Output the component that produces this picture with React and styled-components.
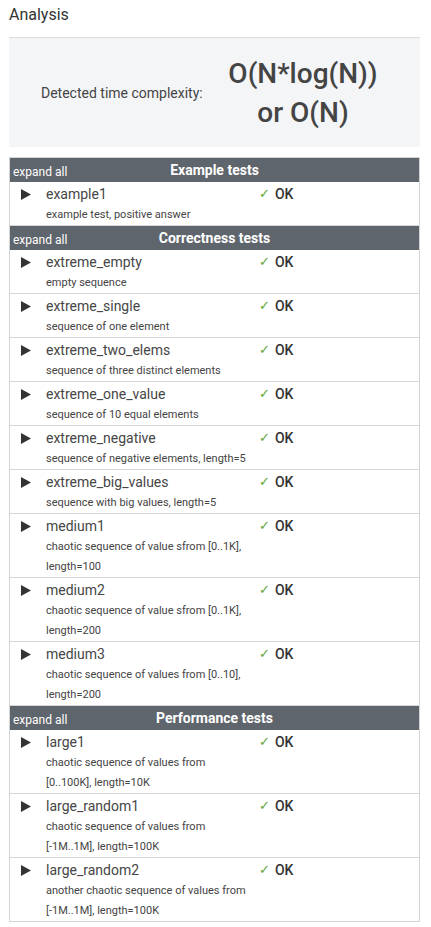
import React from "react";
import styled, { createGlobalStyle } from "styled-components";

const Global = createGlobalStyle`
  html, body { margin: 0; padding: 0; background: #fff; }
  body { font-family: Roboto, "Liberation Sans", Arial, sans-serif; color: #444; }
`;

const Page = styled.div`
  width: 411px;
  padding: 5px 0 6px 9px;
`;

const Title = styled.h2`
  margin: 0 0 12px;
  font-size: 16px;
  line-height: 20px;
  font-weight: 400;
  color: #333;
`;

const ComplexityBox = styled.div`
  display: grid;
  grid-template-columns: 200px 1fr;
  align-items: center;
  height: 110px;
  box-sizing: border-box;
  border-top: 1px solid #dcdcdc;
  background: #f4f5f7;
  padding-right: 23px;
`;

const ComplexityLabel = styled.div`
  padding-left: 32px;
  font-size: 14px;
  color: #444;
  white-space: nowrap;
`;

const ComplexityValue = styled.div`
  text-align: center;
  font-size: 28px;
  line-height: 39px;
  font-weight: 500;
  color: #444;
`;

const Table = styled.div`
  margin-top: 10px;
  border: 1px solid #d4d4d4;
  box-sizing: border-box;
`;

const GroupHeader = styled.div`
  display: grid;
  grid-template-columns: 1fr auto 1fr;
  height: 24px;
  background: #5f656c;
  color: #fff;
`;

const ExpandAll = styled.span`
  font-size: 12px;
  line-height: 24px;
  padding: 2px 0 0 3px;
`;

const GroupTitle = styled.span`
  font-size: 14px;
  line-height: 24px;
  font-weight: 700;
`;

const Row = styled.div`
  display: grid;
  grid-template-columns: 36px 213px 1fr;
  padding-top: 1px;
  border-bottom: ${(p) => (p.$last ? "none" : "1px solid #d6d6d6")};
`;

const Toggle = styled.div`
  grid-column: 1;
  grid-row: 1;
  display: flex;
  align-items: center;
  padding-left: 11px;
  height: 22px;
`;

const TestName = styled.div`
  grid-column: 2;
  grid-row: 1;
  font-size: 14px;
  line-height: 22px;
  color: #464646;
`;

const Status = styled.div`
  grid-column: 3;
  grid-row: 1;
  font-size: 14px;
  line-height: 22px;
  font-weight: 500;
  color: #333;
  display: flex;
  gap: 5px;
  align-items: center;
`;

const Check = styled.span`
  color: #5ea336;
  font-family: "DejaVu Sans", sans-serif;
  font-size: 13px;
  font-weight: 400;
`;

const Desc = styled.div`
  grid-column: 2;
  grid-row: 2;
  width: 204px;
  font-size: 11px;
  line-height: 20px;
  color: #444;
`;

const Triangle = () => (
  <svg width="10" height="11" viewBox="0 0 10 11">
    <polygon points="0,0 10,5.5 0,11" fill="#333" />
  </svg>
);

const groups = [
  {
    title: "Example tests",
    tests: [["example1", "example test, positive answer"]],
  },
  {
    title: "Correctness tests",
    tests: [
      ["extreme_empty", "empty sequence"],
      ["extreme_single", "sequence of one element"],
      ["extreme_two_elems", "sequence of three distinct elements"],
      ["extreme_one_value", "sequence of 10 equal elements"],
      ["extreme_negative", "sequence of negative elements, length=5"],
      ["extreme_big_values", "sequence with big values, length=5"],
      ["medium1", "chaotic sequence of value sfrom [0..1K], length=100"],
      ["medium2", "chaotic sequence of value sfrom [0..1K], length=200"],
      ["medium3", "chaotic sequence of values from [0..10], length=200"],
    ],
  },
  {
    title: "Performance tests",
    tests: [
      ["large1", "chaotic sequence of values from [0..100K], length=10K"],
      ["large_random1", "chaotic sequence of values from [-1M..1M], length=100K"],
      ["large_random2", "another chaotic sequence of values from [-1M..1M], length=100K"],
    ],
  },
];

export default function App() {
  return (
    <>
      <Global />
      <Page>
        <Title>Analysis</Title>
        <ComplexityBox>
          <ComplexityLabel>Detected time complexity:</ComplexityLabel>
          <ComplexityValue>
            O(N*log(N))
            <br />
            or O(N)
          </ComplexityValue>
        </ComplexityBox>
        <Table>
          {groups.map((g, gi) => (
            <React.Fragment key={g.title}>
              <GroupHeader>
                <ExpandAll>expand all</ExpandAll>
                <GroupTitle>{g.title}</GroupTitle>
                <span />
              </GroupHeader>
              {g.tests.map(([name, desc], ti) => (
                <Row
                  key={name}
                  $last={gi === groups.length - 1 && ti === g.tests.length - 1}
                >
                  <Toggle>
                    <Triangle />
                  </Toggle>
                  <TestName>{name}</TestName>
                  <Status>
                    <Check>✓</Check>OK
                  </Status>
                  <Desc>{desc}</Desc>
                </Row>
              ))}
            </React.Fragment>
          ))}
        </Table>
      </Page>
    </>
  );
}
